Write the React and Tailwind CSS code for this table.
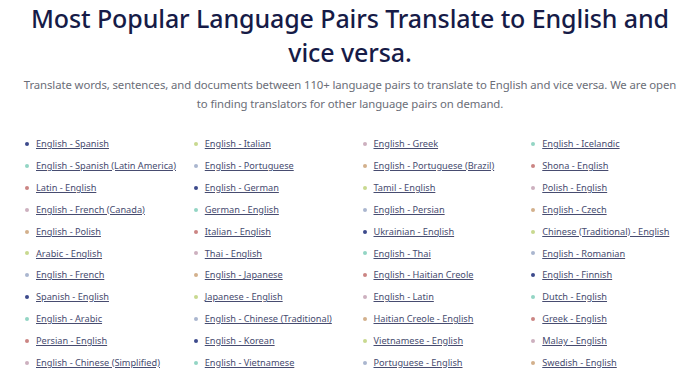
import React from "react";

const cols = [
  ["English - Spanish","English - Spanish (Latin America)","Latin - English","English - French (Canada)","English - Polish","Arabic - English","English - French","Spanish - English","English - Arabic","Persian - English","English - Chinese (Simplified)"],
  ["English - Italian","English - Portuguese","English - German","German - English","Italian - English","Thai - English","English - Japanese","Japanese - English","English - Chinese (Traditional)","English - Korean","English - Vietnamese"],
  ["English - Greek","English - Portuguese (Brazil)","Tamil - English","English - Persian","Ukrainian - English","English - Thai","English - Haitian Creole","English - Latin","Haitian Creole - English","Vietnamese - English","Portuguese - English"],
  ["English - Icelandic","Shona - English","Polish - English","English - Czech","Chinese (Traditional) - English","English - Romanian","English - Finnish","Dutch - English","Greek - English","Malay - English","Swedish - English"],
];

const dots = ["bg-[#3d4a8c]","bg-[#93d5c4]","bg-[#cb8583]","bg-[#cdb0bf]","bg-[#d3b08c]","bg-[#c8d98f]","bg-[#aab6cf]"];

export default function App() {
  return (
    <div className="w-[700px] h-[377px] overflow-hidden bg-white" style={{ fontFamily: '"Noto Sans", "Open Sans", sans-serif' }}>
      <h1 className="text-center text-[25px] leading-[34px] text-[#161b47] font-medium px-4 pt-[1px] tracking-[-0.1px]">
        Most Popular Language Pairs Translate to English and vice versa.
      </h1>
      <p className="text-center text-[11.35px] leading-[18.5px] text-[#6b6e78] mt-[7px] px-[20px] tracking-[-0.1px]">
        Translate words, sentences, and documents between 110+ language pairs to translate to English and vice versa. We are open to finding translators for other language pairs on demand.
      </p>
      <ul className="grid grid-cols-4 grid-flow-col grid-rows-[repeat(11,21.9px)] pl-[25px] mt-[20px]">
        {cols.flatMap((col, ci) =>
          col.map((t, i) => (
            <li key={ci + "-" + i} className="flex items-center gap-[7px]">
              <span className={`w-[4px] h-[4px] rounded-full shrink-0 ${dots[(ci * 12 + i) % 7]}`}></span>
              <a href="#" className="text-[9.2px] text-[#474c70] underline whitespace-nowrap">{t}</a>
            </li>
          ))
        )}
      </ul>
    </div>
  );
}
